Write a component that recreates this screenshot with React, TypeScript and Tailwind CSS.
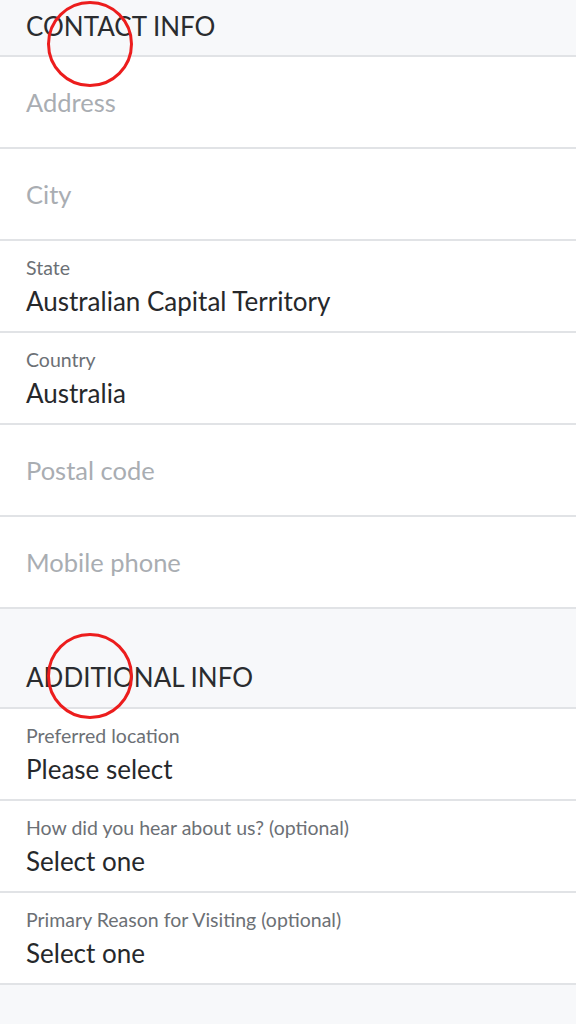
import React from "react"

const contactRows: { label?: string; value?: string; placeholder?: string }[] = [
  { placeholder: "Address" },
  { placeholder: "City" },
  { label: "State", value: "Australian Capital Territory" },
  { label: "Country", value: "Australia" },
  { placeholder: "Postal code" },
  { placeholder: "Mobile phone" },
]

const additionalRows = [
  { label: "Preferred location", value: "Please select" },
  { label: "How did you hear about us? (optional)", value: "Select one" },
  { label: "Primary Reason for Visiting (optional)", value: "Select one" },
]

function Row({ label, value, placeholder }: { label?: string; value?: string; placeholder?: string }) {
  return (
    <div className="h-[92px] bg-white border-b-2 border-[#e1e3e6] px-[26px] flex flex-col justify-center">
      {placeholder ? (
        <div className="text-[25.5px] leading-[32px] text-[#a9adb2]">{placeholder}</div>
      ) : (
        <>
          <div className="text-[19.5px] leading-[24px] text-[#6c7075] mb-[5px]">{label}</div>
          <div className="text-[26px] leading-[32px] text-[#26282b]">{value}</div>
        </>
      )}
    </div>
  )
}

function Touch({ className }: { className: string }) {
  return (
    <div
      className={`absolute w-[86px] h-[86px] rounded-full border-[3px] border-[#ec1d1d] pointer-events-none ${className}`}
    />
  )
}

export default function App() {
  return (
    <div className="relative w-[576px] h-[1024px] overflow-hidden bg-[#f7f8fa] font-['Lato','Noto_Sans',sans-serif]">
      {/* Contact info header */}
      <div className="h-[57px] border-b-2 border-[#e1e3e6] px-[26px] flex items-end pb-[13px]">
        <h2 className="text-[26px] leading-[32px] text-[#2a2c2f]">CONTACT INFO</h2>
      </div>
      {contactRows.map((r, i) => (
        <Row key={i} {...r} />
      ))}

      {/* Additional info header */}
      <div className="h-[100px] border-b-2 border-[#e1e3e6] px-[26px] flex items-end pb-[14px]">
        <h2 className="text-[26px] leading-[32px] text-[#2a2c2f]">ADDITIONAL INFO</h2>
      </div>
      {additionalRows.map((r, i) => (
        <Row key={i} {...r} />
      ))}

      <Touch className="left-[47px] top-[1px]" />
      <Touch className="left-[47px] top-[633px]" />
    </div>
  )
}
